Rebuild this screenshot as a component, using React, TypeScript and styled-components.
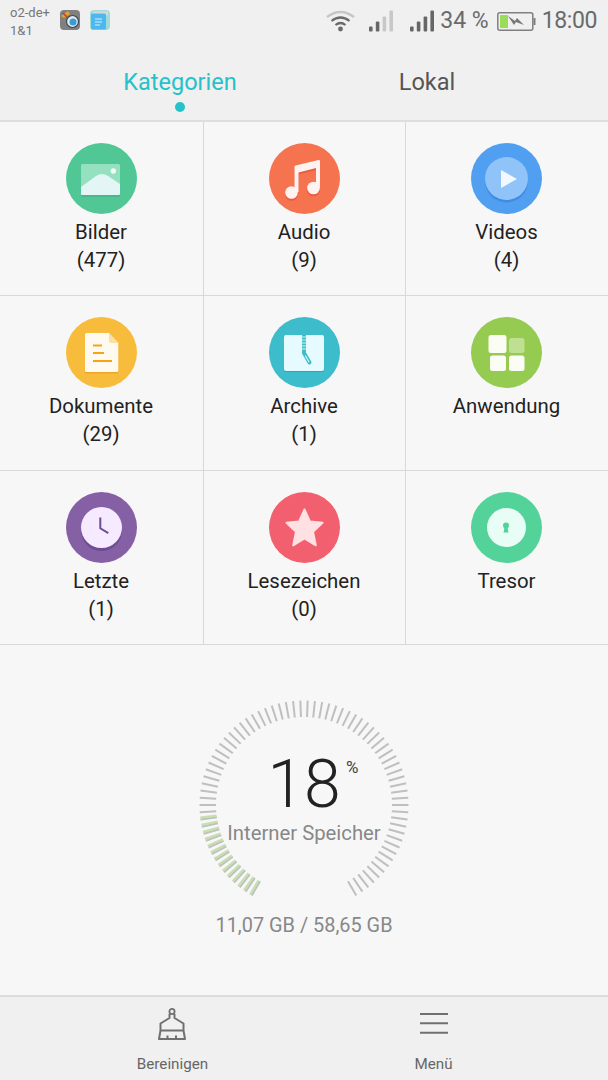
import React from 'react';
import styled, { createGlobalStyle } from 'styled-components';

const GlobalStyle = createGlobalStyle`
  html, body {
    margin: 0;
    padding: 0;
    background: #f7f7f7;
  }
  * {
    box-sizing: border-box;
  }
`;

const SPage = styled.div`
  width: 608px;
  height: 1080px;
  display: flex;
  flex-direction: column;
  overflow: hidden;
  font-family: Roboto, 'Liberation Sans', sans-serif;
  background: #f7f7f7;
`;

const SHeader = styled.header`
  height: 122px;
  flex: none;
  background: #f0f0f0;
  border-bottom: 2px solid #dedede;
`;

const SStatusBar = styled.div`
  height: 44px;
  display: flex;
  align-items: center;
  padding: 0 11px 0 10px;
  color: #6a6a6a;
`;

const SCarrier = styled.div`
  width: 50px;
  font-size: 13px;
  line-height: 18px;
  color: #777;
`;

const SAppIcons = styled.div`
  display: flex;
  gap: 10px;
  margin-bottom: 4px;
`;

const SStatusRight = styled.div`
  margin-left: auto;
  display: flex;
  align-items: center;
  padding-bottom: 2px;
`;

const SStatusText = styled.span<{ $left: number; $tight?: boolean }>`
  margin-left: ${(p) => p.$left}px;
  font-size: 23px;
  line-height: 40px;
  letter-spacing: ${(p) => (p.$tight ? '-0.4px' : '0')};
  color: #6a6a6a;
`;

const SSignal = styled.svg<{ $left: number }>`
  margin-left: ${(p) => p.$left}px;
  display: block;
`;

const STabs = styled.nav`
  display: grid;
  grid-template-columns: 247px 247px;
  justify-content: center;
  padding: 22px 1px 0 0;
`;

const STab = styled.div<{ $active?: boolean }>`
  display: flex;
  flex-direction: column;
  align-items: center;
  font-size: 23.5px;
  line-height: 32px;
  color: ${(p) => (p.$active ? '#26c1c9' : '#555')};
`;

const SDot = styled.span`
  width: 10px;
  height: 10px;
  margin-top: 4px;
  border-radius: 50%;
  background: #26c1c9;
`;

const SGrid = styled.section`
  height: 523px;
  flex: none;
  display: grid;
  grid-template-columns: 204px 202px 202px;
  grid-template-rows: repeat(3, 1fr);
`;

const SCell = styled.div<{ $lastCol: boolean }>`
  display: flex;
  flex-direction: column;
  align-items: center;
  padding: 21px 1px 0 0;
  border-bottom: 1px solid #d8d8d8;
  border-right: ${(p) => (p.$lastCol ? 'none' : '1px solid #d8d8d8')};
`;

const SCellIcon = styled.svg`
  display: block;
  margin-bottom: 4px;
`;

const SCellLabel = styled.div`
  font-size: 20.4px;
  line-height: 28px;
  color: #222;
  text-align: center;
  white-space: nowrap;
`;

const SStorage = styled.section`
  flex: 1;
  display: flex;
  flex-direction: column;
  align-items: center;
  padding-top: 54px;
`;

const SGauge = styled.div`
  position: relative;
  width: 220px;
  height: 202px;
`;

const SGaugeValue = styled.div`
  position: absolute;
  top: 46px;
  left: 0;
  width: 220px;
  text-align: center;
  font-size: 66px;
  line-height: 80px;
  font-weight: 300;
  color: #222;
`;

const SGaugePercent = styled.span`
  position: absolute;
  top: 59px;
  left: 152px;
  font-size: 17px;
  line-height: 18px;
  color: #444;
`;

const SGaugeLabel = styled.div`
  position: absolute;
  top: 120px;
  left: 0;
  width: 220px;
  text-align: center;
  font-size: 20.3px;
  line-height: 28px;
  color: #888;
`;

const SStorageText = styled.div`
  margin-top: 11px;
  font-size: 19.9px;
  line-height: 28px;
  color: #888;
`;

const SBottomBar = styled.footer`
  height: 85px;
  flex: none;
  display: grid;
  grid-template-columns: 261px 261px;
  justify-content: center;
  padding-right: 2px;
  background: #f0f0f0;
  border-top: 2px solid #dcdcdc;
`;

const SBottomItem = styled.div`
  display: flex;
  flex-direction: column;
  align-items: center;
  padding-top: 11px;
  font-size: 15.2px;
  line-height: 20px;
  color: #666;
`;

const SBottomIcon = styled.svg<{ $shift?: number }>`
  display: block;
  margin: 0 0 14px ${(p) => p.$shift ?? 0}px;
`;

const CellSvg = ({ children }: { children: React.ReactNode }) => (
  <SCellIcon width="71" height="71" viewBox="0 0 71 71">
    {children}
  </SCellIcon>
);

const BilderIcon = () => (
  <CellSvg>
    <circle cx="35.5" cy="35.5" r="35.5" fill="#50c794" />
    <rect x="15" y="23" width="39" height="31" rx="1.5" fill="#47b889" />
    <rect x="15" y="21" width="39" height="31" rx="1.5" fill="#95e0bf" />
    <path d="M15 44 L30 33 Q36 29 42 33 L54 41 V50.5 Q54 52 52.5 52 H16.5 Q15 52 15 50.5Z" fill="#e4f5f6" />
    <circle cx="47.3" cy="28" r="2.7" fill="#f4fbf8" />
  </CellSvg>
);

const AudioIcon = () => {
  const note =
    'M25.5 24 Q25.5 22.8 26.6 22.5 L49.5 17 Q51 16.7 51 18.2 V45 H47 V25 L29.5 29.4 V49 H25.5Z';
  return (
    <CellSvg>
      <circle cx="35.5" cy="35.5" r="35.5" fill="#f6734f" />
      <g fill="#ea5b42" transform="translate(0 2)">
        <path d={note} />
        <circle cx="22.5" cy="49.5" r="6.3" />
        <circle cx="44.5" cy="45" r="6.3" />
      </g>
      <g fill="#fff3f1">
        <path d={note} />
        <circle cx="22.5" cy="49.5" r="6.3" />
        <circle cx="44.5" cy="45" r="6.3" />
      </g>
    </CellSvg>
  );
};

const VideoIcon = () => (
  <CellSvg>
    <circle cx="35.5" cy="35.5" r="35.5" fill="#519ff0" />
    <circle cx="35.5" cy="38" r="21.5" fill="#3f8ce4" />
    <circle cx="35.5" cy="35.5" r="21.5" fill="#90c3f8" />
    <path d="M30 27 L46 36 L30 45Z" fill="#f2f8ff" />
  </CellSvg>
);

const DocIcon = () => {
  const page = 'M20.5 16 H43 L52.3 26 V53.5 Q52.3 55 50.8 55 H20.5 Q19 55 19 53.5 V17.5 Q19 16 20.5 16Z';
  return (
    <CellSvg>
      <circle cx="35.5" cy="35.5" r="35.5" fill="#f7bc3c" />
      <path d={page} fill="#eea52e" transform="translate(0 1.5)" />
      <path d={page} fill="#fffaf0" />
      <path d="M43 16 L52.3 26 H45 Q43 26 43 24Z" fill="#fbe0a5" />
      <path d="M27 28.6 H36 M27 36 H38 M27 44 H46" stroke="#f7a315" strokeWidth="2" fill="none" />
    </CellSvg>
  );
};

const ArchiveIcon = () => (
  <CellSvg>
    <circle cx="35.5" cy="35.5" r="35.5" fill="#3dbccb" />
    <rect x="15" y="19" width="40" height="36" rx="2" fill="#2ea5b8" />
    <rect x="15" y="18" width="40" height="36" rx="2" fill="#e6fbff" />
    <path d="M35 18 V36" stroke="#3dbccb" strokeWidth="4" />
    <path d="M33 20 H37 M33 23 H37 M33 26 H37 M33 29 H37 M33 32 H37" stroke="#e6fbff" strokeWidth="0.9" />
    <path d="M35 36 L40.5 45.5" stroke="#3dbccb" strokeWidth="4" strokeLinecap="round" />
    <path d="M36.5 39 L40 45" stroke="#e6fbff" strokeWidth="1.1" strokeLinecap="round" />
  </CellSvg>
);

const AppIcon = () => (
  <CellSvg>
    <circle cx="35.5" cy="35.5" r="35.5" fill="#94cb50" />
    <g fill="#fbfdf5">
      <rect x="17.5" y="18" width="18" height="18" rx="2.5" />
      <rect x="19" y="38.5" width="16" height="15.5" rx="2.5" />
      <rect x="38" y="38.5" width="15.5" height="15.5" rx="2.5" />
    </g>
    <rect x="38" y="21" width="15.5" height="15" rx="2.5" fill="#bfe092" />
  </CellSvg>
);

const ClockIcon = () => (
  <CellSvg>
    <circle cx="35.5" cy="35.5" r="35.5" fill="#8560a5" />
    <circle cx="35.5" cy="38.5" r="20.5" fill="#6d4c90" />
    <circle cx="35.5" cy="35.5" r="20.5" fill="#f5eaff" />
    <path d="M34.3 25.5 V36.3 L42.3 41.2" stroke="#6f4a96" strokeWidth="2" fill="none" />
  </CellSvg>
);

const StarIcon = () => (
  <CellSvg>
    <circle cx="35.5" cy="35.5" r="35.5" fill="#f2606f" />
    <path
      d="M35.5 17.5 L40.9 29.5 L53.5 30.8 L44 39.7 L46.8 53.3 L35.5 46.3 L24.2 53.3 L27 39.7 L17.5 30.8 L30.1 29.5Z"
      fill="#ffe0e3"
      stroke="#ffe0e3"
      strokeWidth="2"
      strokeLinejoin="round"
    />
  </CellSvg>
);

const SafeIcon = () => (
  <CellSvg>
    <circle cx="35.5" cy="35.5" r="35.5" fill="#53d29a" />
    <circle cx="35.5" cy="35.5" r="19.5" fill="#e8fdf5" />
    <circle cx="35" cy="33.5" r="3" fill="#53d29a" />
    <path d="M33.8 34 H36.2 L37.5 40.5 H32.5Z" fill="#53d29a" />
  </CellSvg>
);

type Category = {
  label: string;
  count?: number;
  icon: React.ComponentType;
};

const categories: Category[] = [
  { label: 'Bilder', count: 477, icon: BilderIcon },
  { label: 'Audio', count: 9, icon: AudioIcon },
  { label: 'Videos', count: 4, icon: VideoIcon },
  { label: 'Dokumente', count: 29, icon: DocIcon },
  { label: 'Archive', count: 1, icon: ArchiveIcon },
  { label: 'Anwendung', icon: AppIcon },
  { label: 'Letzte', count: 1, icon: ClockIcon },
  { label: 'Lesezeichen', count: 0, icon: StarIcon },
  { label: 'Tresor', icon: SafeIcon },
];

const SignalBars = ({ dim, left }: { dim: number; left: number }) => (
  <SSignal $left={left} width="25" height="22" viewBox="0 0 25 22">
    {[5, 10, 15, 21].map((h, i) => (
      <rect
        key={h}
        x={i * 6.8}
        y={21.5 - h}
        width="3.6"
        height={h}
        rx="1"
        fill={i >= 4 - dim ? '#c8c8c8' : '#666'}
      />
    ))}
  </SSignal>
);

const tickPoints = (deg: number) => {
  const rad = (deg * Math.PI) / 180;
  return {
    x1: 110 + 88 * Math.sin(rad),
    y1: 106 - 88 * Math.cos(rad),
    x2: 110 + 104.5 * Math.sin(rad),
    y2: 106 - 104.5 * Math.cos(rad),
  };
};

const GaugeTicks = () => {
  const degs = Array.from({ length: 76 }, (_, i) => 210 + i * 4);
  return (
    <svg width="220" height="202" viewBox="0 0 220 202">
      {degs.map((deg) => (
        <line key={deg} {...tickPoints(deg)} stroke="#bfbfbf" strokeWidth="2" />
      ))}
      {degs.slice(0, 14).map((deg) => (
        <line key={deg} {...tickPoints(deg + 1.1)} stroke="#c6dfae" strokeWidth="2.2" />
      ))}
    </svg>
  );
};

export default function App() {
  return (
    <>
      <GlobalStyle />
      <SPage>
        <SHeader>
          <SStatusBar>
            <SCarrier>
              o2-de+
              <br />
              1&amp;1
            </SCarrier>
            <SAppIcons>
              <svg width="20" height="20" viewBox="0 0 20 20">
                <rect width="20" height="20" rx="4" y="0" fill="#808080" />
                <path d="M1 6 L8 1 L10 4 L4 8Z" fill="#e8a032" />
                <circle cx="12.5" cy="11.5" r="6" fill="#dfe9ee" stroke="#3a4a55" strokeWidth="1.2" />
                <circle cx="13" cy="12" r="3.5" fill="#3d9ad0" />
                <path d="M8 8 L3 3" stroke="#c8402a" strokeWidth="1.6" />
              </svg>
              <svg width="20" height="20" viewBox="0 0 20 20">
                <rect width="20" height="20" rx="4" fill="#9fdcd8" />
                <rect x="3" y="1.5" width="15" height="4" fill="#d8d8d8" />
                <rect x="1" y="3.5" width="15" height="16" rx="1.5" fill="#4db7ef" />
                <path d="M5 9 H12 M5 12 H12 M5 15 H10" stroke="#d9f1fc" strokeWidth="1.2" />
              </svg>
            </SAppIcons>
            <SStatusRight>
              <svg width="29" height="22" viewBox="0 0 29 22">
                <path d="M1 7 Q14.5 -3 28 7" stroke="#c6c6c6" strokeWidth="2.2" fill="none" />
                <path d="M5.5 11 Q14.5 4 23.5 11" stroke="#6a6a6a" strokeWidth="2.2" fill="none" />
                <path d="M9.5 15 Q14.5 11 19.5 15" stroke="#6a6a6a" strokeWidth="2.2" fill="none" />
                <circle cx="14.5" cy="19" r="2.4" fill="#6a6a6a" />
              </svg>
              <SignalBars dim={2} left={14} />
              <SignalBars dim={0} left={16} />
              <SStatusText $left={5}>34 %</SStatusText>
              <SSignal $left={8} width="39" height="19" viewBox="0 0 39 19">
                <rect x="0.8" y="0.8" width="35" height="17.4" rx="2" fill="none" stroke="#808080" strokeWidth="1.5" />
                <rect x="3" y="3" width="8" height="13" fill="#9bdc5a" />
                <rect x="36.5" y="6" width="2" height="7" fill="#808080" />
                <path d="M11 4 L18 9 L20 6 L27 13 L19 10 L17 13Z" fill="#777" />
              </SSignal>
              <SStatusText $left={6} $tight>
                18:00
              </SStatusText>
            </SStatusRight>
          </SStatusBar>
          <STabs>
            <STab $active>
              Kategorien
              <SDot />
            </STab>
            <STab>Lokal</STab>
          </STabs>
        </SHeader>

        <SGrid>
          {categories.map((c, i) => {
            const Icon = c.icon;
            return (
              <SCell key={c.label} $lastCol={i % 3 === 2}>
                <Icon />
                <SCellLabel>{c.label}</SCellLabel>
                {c.count !== undefined && <SCellLabel>({c.count})</SCellLabel>}
              </SCell>
            );
          })}
        </SGrid>

        <SStorage>
          <SGauge>
            <GaugeTicks />
            <SGaugeValue>18</SGaugeValue>
            <SGaugePercent>%</SGaugePercent>
            <SGaugeLabel>Interner Speicher</SGaugeLabel>
          </SGauge>
          <SStorageText>11,07 GB / 58,65 GB</SStorageText>
        </SStorage>

        <SBottomBar>
          <SBottomItem>
            <SBottomIcon $shift={-2} width="28" height="32" viewBox="0 0 28 32">
              <path
                d="M11.5 6 V10 L2.5 15.5 V22.5 L1 31 H27 L25.5 22.5 V15.5 L16.5 10 V6 M2.5 22.5 H25.5 M9.5 31 V27.5 M18 31 V27.5"
                fill="none"
                stroke="#707070"
                strokeWidth="2"
                strokeLinejoin="round"
              />
              <circle cx="14" cy="3.5" r="2.6" fill="none" stroke="#707070" strokeWidth="1.8" />
            </SBottomIcon>
            Bereinigen
          </SBottomItem>
          <SBottomItem>
            <SBottomIcon width="28" height="32" viewBox="0 0 28 32">
              <path d="M0 6 H28 M0 15.3 H28 M0 24.7 H28" stroke="#707070" strokeWidth="2" />
            </SBottomIcon>
            Menü
          </SBottomItem>
        </SBottomBar>
      </SPage>
    </>
  );
}
